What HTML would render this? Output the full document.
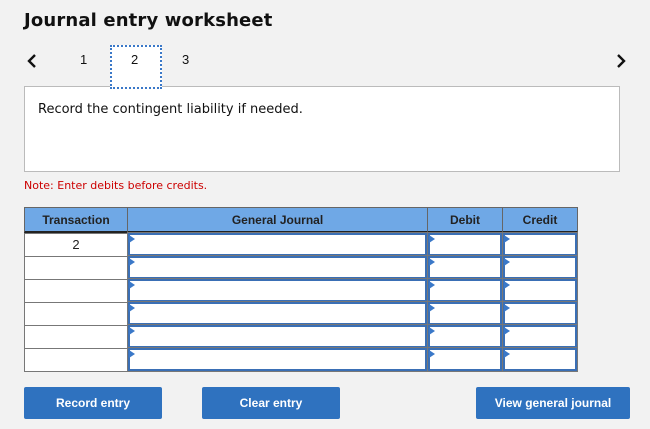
<!DOCTYPE html>
<html><head><style>
*{margin:0;padding:0;box-sizing:border-box}
body{width:650px;height:429px;background:#f2f2f2;font-family:"Liberation Sans",Verdana,sans-serif;position:relative;overflow:hidden}
.a{position:absolute}
h1{position:absolute;left:24px;top:10px;font-family:"DejaVu Sans",Verdana,sans-serif;font-size:18px;font-weight:bold;color:#111;letter-spacing:0.15px}
.tab{position:absolute;top:52px;font-size:13px;color:#111;z-index:3}
.btn{position:absolute;top:387px;height:32px;background:#2f72bf;color:#fff;font-weight:bold;font-size:12px;text-align:center;line-height:32px;border-radius:2px}
.hd{position:absolute;top:207px;height:26px;background:#6fa8e6;font-weight:bold;font-size:12px;color:#222;text-align:center;line-height:24px;border:1px solid #666;border-bottom:2px solid #222}
.tc{position:absolute;left:24px;width:104px;height:24px;background:#fff;border:1px solid #777;font-size:13px;text-align:center;line-height:22px;color:#222}
.in{position:absolute;height:23px;background:#fff;border:2px solid #3a6fb5;outline:1px solid #777}
.in:before{content:"";position:absolute;left:-1px;top:0;border-left:6px solid #3a78c8;border-top:4px solid transparent;border-bottom:4px solid transparent}
</style></head><body>
<h1>Journal entry worksheet</h1>
<svg class="a" style="left:27px;top:53px" width="10" height="16"><path d="M8 2 L2 8 L8 14" stroke="#111" stroke-width="2.4" fill="none"/></svg>
<svg class="a" style="left:616px;top:53px" width="10" height="16"><path d="M2 2 L8 8 L2 14" stroke="#111" stroke-width="2.4" fill="none"/></svg>
<div class="tab" style="left:80px">1</div>
<div class="a" style="left:24px;top:86px;width:596px;height:86px;background:#fff;border:1px solid #bbb"></div>
<div class="a" style="left:110px;top:45px;width:52px;height:44px;background:#fff;border:2px dotted #3a78c8;z-index:2"></div>
<div class="tab" style="left:131px">2</div>
<div class="tab" style="left:182px">3</div>
<div class="a" style="left:38px;top:102px;font-family:'DejaVu Sans',Verdana,sans-serif;font-size:13px;color:#111">Record the contingent liability if needed.</div>
<div class="a" style="left:24px;top:179px;font-family:'DejaVu Sans',Verdana,sans-serif;font-size:11px;color:#c00">Note: Enter debits before credits.</div>
<div class="hd" style="left:24px;width:104px">Transaction</div>
<div class="hd" style="left:127px;width:301px">General Journal</div>
<div class="hd" style="left:427px;width:76px">Debit</div>
<div class="hd" style="left:502px;width:76px">Credit</div>
<div class="tc" style="top:233px">2</div>
<div class="tc" style="top:256px"></div>
<div class="tc" style="top:279px"></div>
<div class="tc" style="top:302px"></div>
<div class="tc" style="top:325px"></div>
<div class="tc" style="top:348px"></div>
<div class="in" style="left:128px;top:233px;width:299px"></div><div class="in" style="left:428px;top:233px;width:74px"></div><div class="in" style="left:503px;top:233px;width:74px"></div>
<div class="in" style="left:128px;top:256px;width:299px"></div><div class="in" style="left:428px;top:256px;width:74px"></div><div class="in" style="left:503px;top:256px;width:74px"></div>
<div class="in" style="left:128px;top:279px;width:299px"></div><div class="in" style="left:428px;top:279px;width:74px"></div><div class="in" style="left:503px;top:279px;width:74px"></div>
<div class="in" style="left:128px;top:302px;width:299px"></div><div class="in" style="left:428px;top:302px;width:74px"></div><div class="in" style="left:503px;top:302px;width:74px"></div>
<div class="in" style="left:128px;top:325px;width:299px"></div><div class="in" style="left:428px;top:325px;width:74px"></div><div class="in" style="left:503px;top:325px;width:74px"></div>
<div class="in" style="left:128px;top:348px;width:299px"></div><div class="in" style="left:428px;top:348px;width:74px"></div><div class="in" style="left:503px;top:348px;width:74px"></div>
<div class="btn" style="left:24px;width:138px">Record entry</div>
<div class="btn" style="left:202px;width:138px">Clear entry</div>
<div class="btn" style="left:476px;width:154px">View general journal</div>
</body></html>
